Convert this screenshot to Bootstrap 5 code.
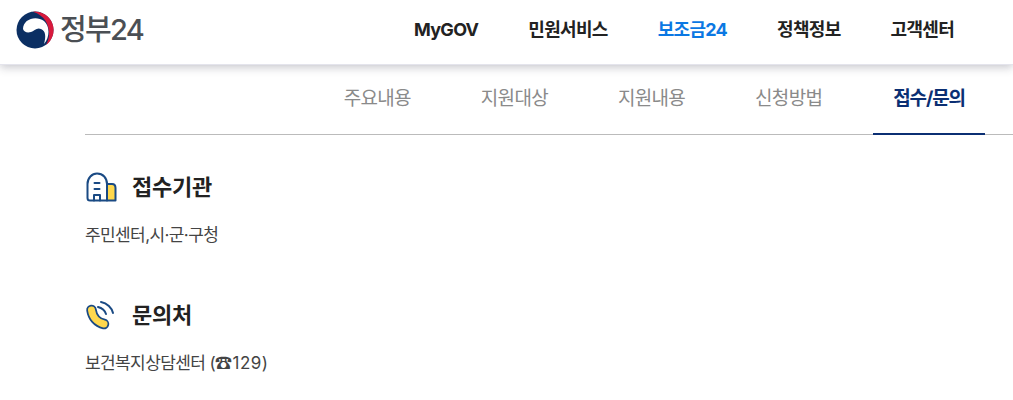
<!DOCTYPE html>
<html lang="ko">
<head>
<meta charset="UTF-8">
<title>정부24</title>
<link href="https://cdn.jsdelivr.net/npm/bootstrap@5.3.0/dist/css/bootstrap.min.css" rel="stylesheet">
<style>
  body { font-family: Inter, "Noto Sans CJK KR", sans-serif; background: #fff; color: #222; overflow: hidden; }
  .top-bar { height: 65px; padding-left: 16px; padding-bottom: 5px; border-bottom: 1px solid #e4e4ec; box-shadow: 0 2px 9px rgba(40,40,60,.28); position: relative; }
  .brand-text { font-size: 29px; font-weight: 500; color: #4b4f54; letter-spacing: -1.7px; margin-left: 6px; line-height: 1; }
  .top-menu { margin-left: auto; margin-right: 59px; gap: 50px; }
  .top-menu a { font-size: 18px; font-weight: 700; color: #222; text-decoration: none; letter-spacing: -.7px; }
  .top-menu a.on { color: #0b78e3; }
  .sub-tabs { margin-left: 85px; height: 70px; border-bottom: 1px solid #bbb; justify-content: flex-end; gap: 30px; padding-right: 28px; }
  .sub-tabs a { padding: 20px 21px 0 19px; font-size: 19px; color: #8a8a8a; text-decoration: none; text-align: center; letter-spacing: -.7px; }
  .sub-tabs a.on { padding: 20px 20px 0; color: #0b2f73; font-weight: 700; border-bottom: 2px solid #0b2f73; height: 70px; letter-spacing: -1.1px; }
  .info-wrap { margin-left: 85px; }
  .first-block { padding-top: 32px; }
  .next-block { padding-top: 48px; }
  .info-head { gap: 14px; height: 40px; font-size: 22px; font-weight: 700; color: #222; letter-spacing: -.25px; }
  .info-text { font-size: 17px; color: #444; letter-spacing: -.6px; margin-top: 16px; line-height: 24px; }
  .tel-num { letter-spacing: .5px; margin-left: 1px; }
</style>
</head>
<body>
<header class="top-bar d-flex align-items-center">
  <svg width="38" height="38" viewBox="0 0 38 38" aria-hidden="true">
    <circle cx="19" cy="19" r="18.5" fill="#0b2f63"/>
    <path d="M7 18C7 8 20 4 28 10C34 15 34 26 28 33C30 26 30 20 25 18C21 16 18 20 15 21C11 22 8 21 7 18Z" fill="#fff"/>
    <path d="M17 .7A18.5 18.5 0 0 1 30 34C36 24 34 6 17 .7Z" fill="#d8193c"/>
  </svg>
  <span class="brand-text">정부24</span>
  <nav class="top-menu d-flex">
    <a href="#">MyGOV</a>
    <a href="#">민원서비스</a>
    <a href="#" class="on">보조금24</a>
    <a href="#">정책정보</a>
    <a href="#">고객센터</a>
  </nav>
</header>
<nav class="sub-tabs d-flex">
  <a href="#">주요내용</a>
  <a href="#">지원대상</a>
  <a href="#">지원내용</a>
  <a href="#">신청방법</a>
  <a href="#" class="on">접수/문의</a>
</nav>
<main class="info-wrap">
  <section class="first-block">
    <div class="info-head d-flex align-items-center">
      <svg width="33" height="32" viewBox="0 0 33 32" fill="none" stroke="#1a4a84" stroke-width="2" stroke-linejoin="round" stroke-linecap="round" aria-hidden="true">
        <path d="M22 13H27Q30.500 13 30.500 17V29.500H22Z" fill="#ffd84d"/>
        <path d="M2.500 27V13C2.500 7 7 2.500 12 2.500C18 2.500 22 7 22 13V29.500H5Q2.500 29.500 2.500 27Z" fill="#fff"/>
        <path d="M9.500 12H14.500M9.500 18H14.500M9 29.500V24H15V29.500"/>
      </svg>
      <span>접수기관</span>
    </div>
    <p class="info-text mb-0">주민센터,시·군·구청</p>
  </section>
  <section class="next-block">
    <div class="info-head d-flex align-items-center">
      <svg width="33" height="32" viewBox="0 0 33 32" fill="none" stroke-linecap="round" stroke-linejoin="round" aria-hidden="true">
        <path d="M6.500 11C7.500 18 12 23.500 19 25" stroke="#1a4a84" stroke-width="10.500"/>
        <path d="M6.500 11C7.500 18 12 23.500 19 25" stroke="#ffd84d" stroke-width="7"/>
        <path d="M13 8C17 9 20 12 21 15M16 3C22 4 27 9 28 14" stroke="#1a4a84" stroke-width="2"/>
      </svg>
      <span>문의처</span>
    </div>
    <p class="info-text mb-0">보건복지상담센터 (☎<span class="tel-num">129</span>)</p>
  </section>
</main>
</body>
</html>
